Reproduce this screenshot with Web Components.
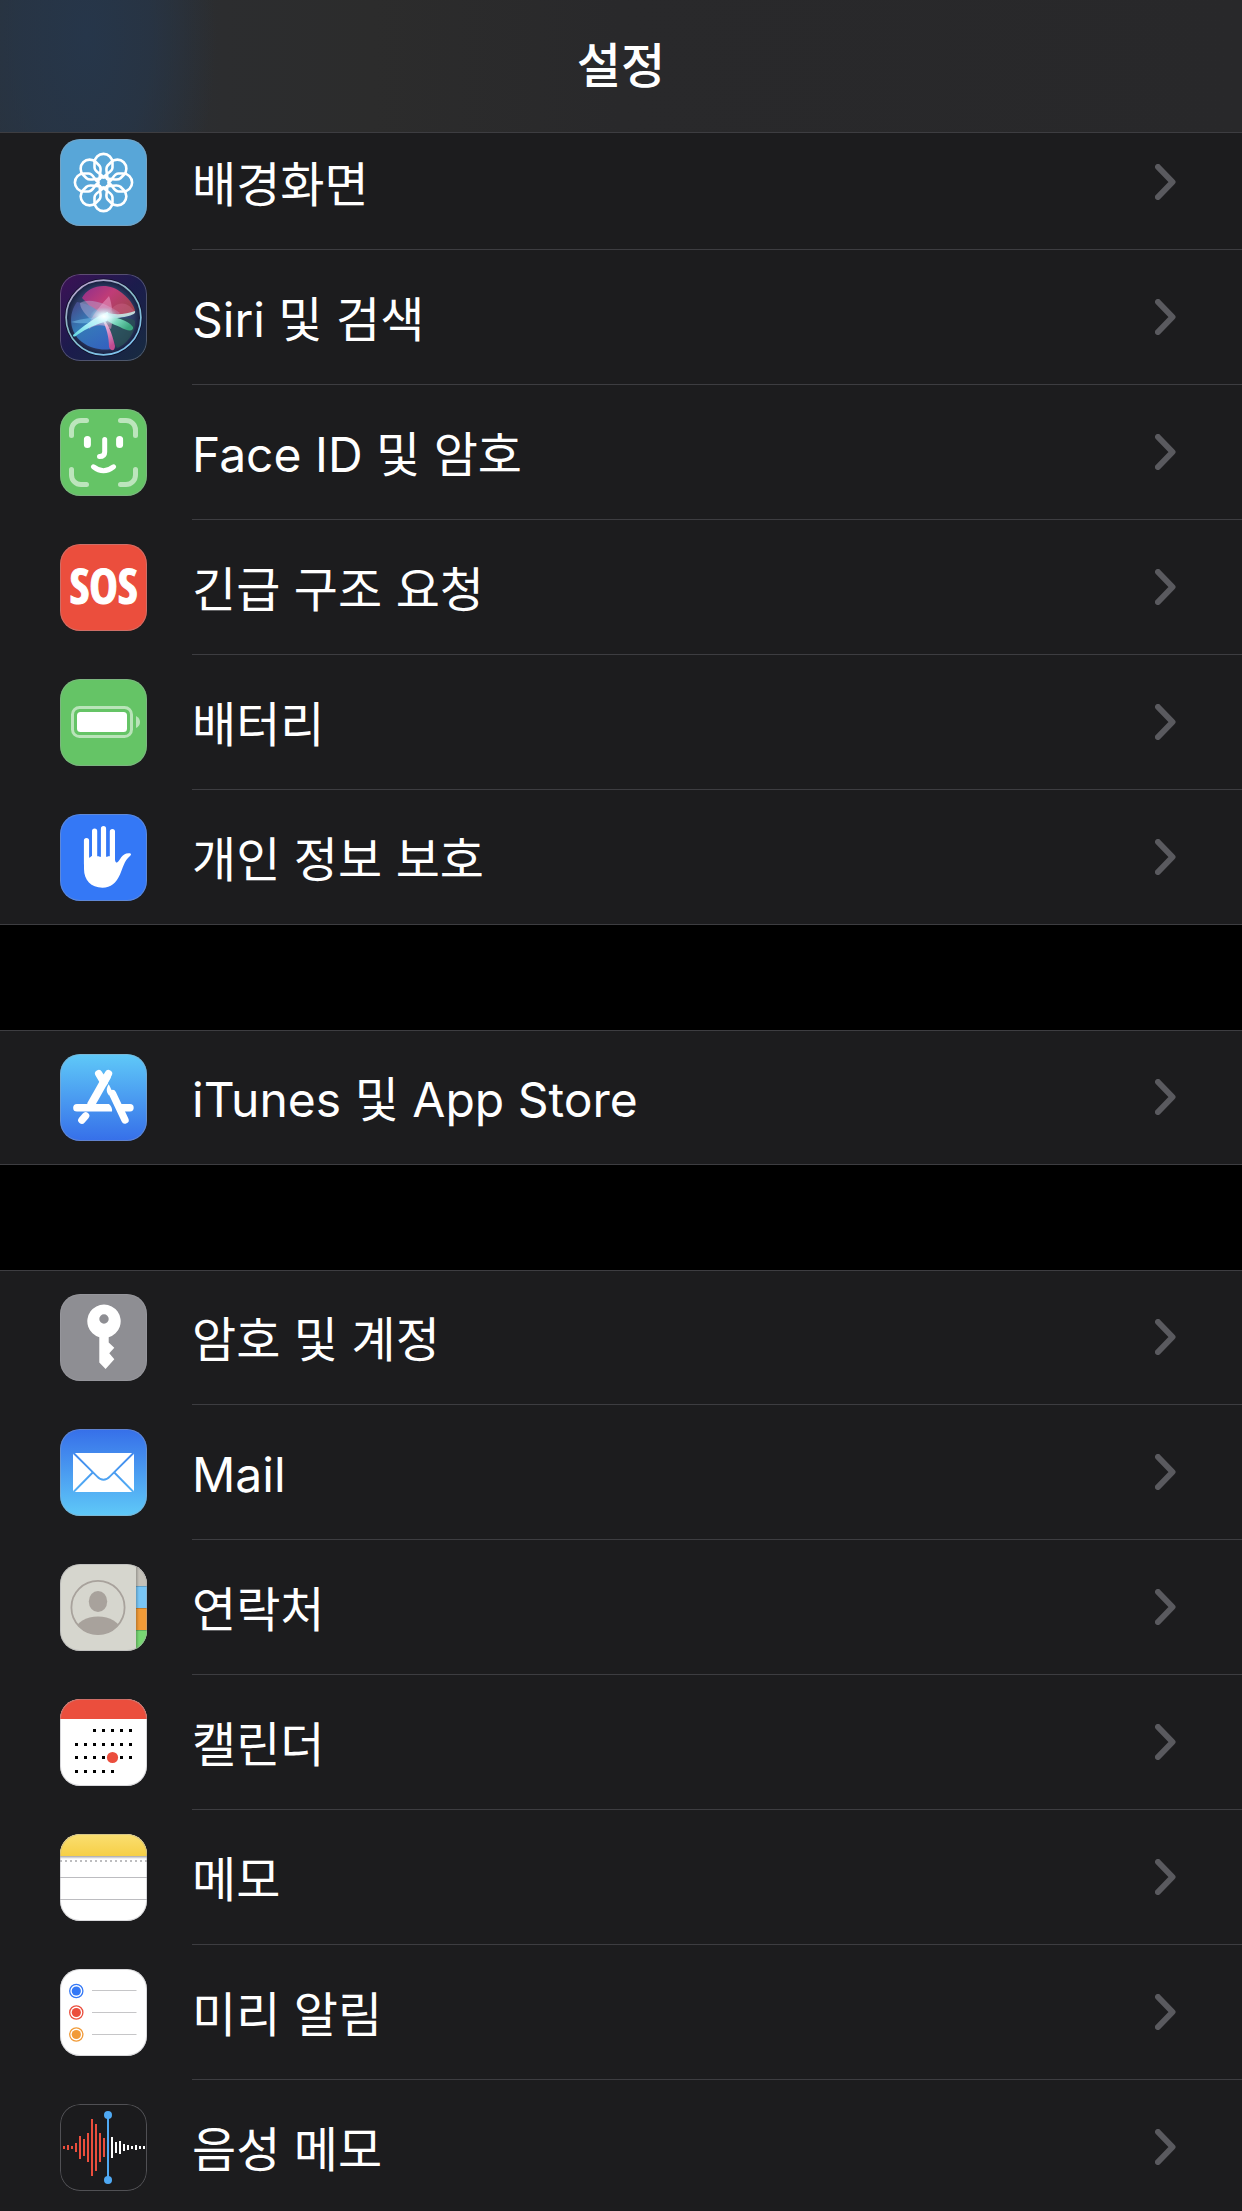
<!DOCTYPE html>
<html lang="ko">
<head>
<meta charset="utf-8">
<meta name="viewport" content="width=device-width, initial-scale=1">
<title>설정</title>
<style>
  html, body { margin: 0; height: 100%; background: #000; }
  body {
    color: #fff;
    font-family: Inter, "Noto Sans CJK KR", sans-serif;
    font-size: 48px;
    line-height: 64px;
    overflow: hidden;
  }
</style>
</head>
<body>

<settings-screen>
  <settings-header slot="header">설정</settings-header>

  <settings-group>
    <settings-row icon="wallpaper">배경화면</settings-row>
    <settings-row icon="siri">Siri 및 검색</settings-row>
    <settings-row icon="faceid">Face ID 및 암호</settings-row>
    <settings-row icon="sos">긴급 구조 요청</settings-row>
    <settings-row icon="battery">배터리</settings-row>
    <settings-row icon="privacy">개인 정보 보호</settings-row>
  </settings-group>

  <settings-group>
    <settings-row icon="appstore">iTunes 및 App Store</settings-row>
  </settings-group>

  <settings-group>
    <settings-row icon="passwords">암호 및 계정</settings-row>
    <settings-row icon="mail">Mail</settings-row>
    <settings-row icon="contacts">연락처</settings-row>
    <settings-row icon="calendar">캘린더</settings-row>
    <settings-row icon="notes">메모</settings-row>
    <settings-row icon="reminders">미리 알림</settings-row>
    <settings-row icon="voice">음성 메모</settings-row>
  </settings-group>
</settings-screen>

<script>
  const range = n => Array.from({ length: n }, (_, i) => i);

  // One calendar row of day dots, from column a to column b.
  const dots = (y, a, b) => range(b - a + 1)
    .map(i => `<rect x="${15 + 9 * (a + i)}" y="${y}" width="3" height="3"/>`).join('');

  // Waveform bars centred on the middle of the icon, 4 units apart.
  const bars = (x, heights) => heights
    .map((h, i) => `<rect x="${x + 4 * i - 1}" y="${43.5 - h / 2}" width="2" height="${h}"/>`).join('');

  const ICONS = {
    wallpaper: `
      <rect width="87" height="87" fill="#58a6d8"/>
      <g transform="translate(43.5 43.5)" fill="none" stroke="#fff" stroke-width="2.6" stroke-linejoin="round">
        ${range(8).map(i => `<path transform="rotate(${45 * i})" d="M0-5C-2-9-9-10-9-15V-19.6A9 9 0 0 1 9-19.6V-15C9-10 2-9 0-5Z"/>`).join('')}
        <circle r="5.4"/>
      </g>`,

    siri: `
      <defs>
        <linearGradient id="bg" x1="0" y1="0" x2="1" y2="1">
          <stop offset="0" stop-color="#3d1156"/><stop offset=".5" stop-color="#1b1c4c"/><stop offset="1" stop-color="#172c40"/>
        </linearGradient>
        <linearGradient id="ring" x1="0" y1="0" x2=".6" y2="1">
          <stop offset="0" stop-color="#c79bd2"/><stop offset=".5" stop-color="#86b9c4"/><stop offset="1" stop-color="#7dc1ea"/>
        </linearGradient>
        <radialGradient id="orb"><stop offset="0" stop-color="#4d6fb0"/><stop offset=".8" stop-color="#2c3a63"/><stop offset="1" stop-color="#141a38"/></radialGradient>
        <radialGradient id="glow"><stop offset="0" stop-color="#fff"/><stop offset=".35" stop-color="#e2fbff" stop-opacity=".85"/><stop offset="1" stop-color="#9fe6ee" stop-opacity="0"/></radialGradient>
        <linearGradient id="red" x1="0" y1="0" x2="1" y2=".6"><stop offset="0" stop-color="#8d2f8c"/><stop offset=".5" stop-color="#c03c77"/><stop offset="1" stop-color="#a04350"/></linearGradient>
        <linearGradient id="blue" x1="0" y1="0" x2=".7" y2="1"><stop offset="0" stop-color="#4a4488"/><stop offset=".45" stop-color="#3580bd"/><stop offset="1" stop-color="#3468c8"/></linearGradient>
        <linearGradient id="cyan" x1="1" y1="0" x2="0" y2="1"><stop offset="0" stop-color="#fff"/><stop offset=".6" stop-color="#9cecf4"/><stop offset="1" stop-color="#62d6df"/></linearGradient>
        <linearGradient id="green" x1="0" y1="0" x2="1" y2=".5"><stop offset="0" stop-color="#fff"/><stop offset=".5" stop-color="#7fe0c2"/><stop offset="1" stop-color="#3cab80"/></linearGradient>
        <linearGradient id="pink" x1="0" y1="0" x2=".3" y2="1"><stop offset="0" stop-color="#fff"/><stop offset=".5" stop-color="#e79acb"/><stop offset="1" stop-color="#c84b8f"/></linearGradient>
      </defs>
      <rect width="87" height="87" fill="url(#bg)"/>
      <circle cx="43.5" cy="43.5" r="38" fill="url(#orb)" stroke="#0d0c25" stroke-width="2"/>
      <path d="M22 24C29 10 50 8 62 19 71 26 76 35 75 39 66 44 53 42 43 43 34 40 29 30 22 24Z" fill="url(#red)"/>
      <path d="M17 28C8 40 9 58 22 68 32 76 47 77 54 74 54 62 46 52 43 43 37 33 27 30 17 28Z" fill="url(#blue)" opacity=".9"/>
      <path d="M43 43C56 45 72 43 75 47 76 57 68 70 57 74 53 64 46 52 43 43Z" fill="#2a5354" opacity=".75"/>
      <path d="M20 29C30 23 47 30 60 39 52 46 37 48 29 44 23 38 20 33 20 29Z" fill="#b9b4dc" opacity=".45"/>
      <path d="M49 22C52 29 54 44 51 55 45 51 37 49 29 55 27 47 40 32 49 22Z" fill="#f0a4d0" opacity=".5"/>
      <path d="M11 48C23 44 38 43 45 43L40 49C27 49 17 50 11 48Z" fill="#7cc6ee" opacity=".5"/>
      <path d="M52 34C62 25 71 31 75 39 69 42 60 41 48 42Z" fill="#ca6387" opacity=".45"/>
      <path d="M46 38C54 42 67 40 75 37 77 42 60 44 47 45Z" fill="#c5f2ee" opacity=".85"/>
      <path d="M44 42C56 43 68 46 73 53 74 58 67 57 60 53 52 50 46 47 44 42Z" fill="url(#green)" opacity=".95"/>
      <path d="M41 43C48 48 52 59 55 72 55 77 51 78 49 73 49 64 47 54 41 43Z" fill="url(#pink)" opacity=".95"/>
      <path d="M48 38C35 43 22 53 13 61 13 63 15 63 17 61 27 54 37 50 47 47Z" fill="url(#cyan)"/>
      <ellipse cx="44" cy="42.5" rx="14" ry="9.5" fill="url(#glow)"/>
      <circle cx="43.5" cy="43.5" r="37.4" fill="none" stroke="url(#ring)" stroke-width="1.7"/>`,

    faceid: `
      <rect width="87" height="87" fill="#65c466"/>
      <g fill="none" stroke="#fff" stroke-linecap="round">
        <g stroke-width="5" stroke="#bce5bc">
          <path d="M26.5 11.6H21A9.5 9.5 0 0 0 11.5 21V26.5"/>
          <path d="M60.5 11.6H66A9.5 9.5 0 0 1 75.5 21V26.5"/>
          <path d="M26.5 75.5H21A9.5 9.5 0 0 1 11.5 66V60.5"/>
          <path d="M60.5 75.5H66A9.5 9.5 0 0 0 75.5 66V60.5"/>
        </g>
        <path stroke-width="7" d="M27.4 30.5V35.5M59.6 30.5V35.5"/>
        <path stroke-width="5" d="M44.7 30.5V43Q44.7 47.6 39.5 47.6"/>
        <path stroke-width="5" d="M33.4 57.8Q43.5 65.8 53.6 57.8"/>
      </g>`,

    sos: `
      <rect width="87" height="87" fill="#eb4e3d"/>
      <text x="43.5" y="60" text-anchor="middle" fill="#fff" stroke="#fff" stroke-width="1" font-family="'Liberation Sans Narrow', 'Open Sans Condensed', 'Roboto Condensed', sans-serif" font-weight="700" font-size="48">SOS</text>`,

    battery: `
      <rect width="87" height="87" fill="#65c466"/>
      <rect x="12.5" y="28.5" width="59" height="29" rx="7" fill="none" stroke="#b9e4b9" stroke-width="3"/>
      <rect x="17" y="33" width="50" height="20" rx="3.5" fill="#fff"/>
      <path d="M76 37Q80 39 80 43T76 49Z" fill="#b9e4b9"/>`,

    privacy: `
      <rect width="87" height="87" fill="#3478f6"/>
      <g stroke="#fff" stroke-width="5.2" stroke-linecap="round">
        <path d="M26.5 26.5V50M34.6 17V50M43.5 14.7V50M52.4 17.6V50"/>
      </g>
      <path d="M24 42C25 44.5 30 44.5 31.5 42 33.5 43.5 36 43.5 38 42 39.5 43.5 47 43.5 49 42 51 43.5 55 42 55 42 54.6 46 55.5 49 57 48.5 60 47 61.5 39 69 39.2 71.5 39.4 71.5 40.5 70 42 64 47 63 54 60 60.5 56 69 51 73.7 42.5 73.7 31 73.7 24 66 24 55Z" fill="#fff"/>`,

    appstore: `
      <defs>
        <linearGradient id="sky" x1="0" y1="0" x2="0" y2="1"><stop offset="0" stop-color="#5fc9f8"/><stop offset="1" stop-color="#366fe9"/></linearGradient>
      </defs>
      <rect width="87" height="87" fill="url(#sky)"/>
      <g fill="none" stroke="#fff" stroke-width="7.4" stroke-linecap="round">
        <path d="M48.5 19.6L44 27.5"/>
        <path d="M38.7 19.6L44 28.5"/>
        <path d="M47.5 21.5L30.5 51.5" stroke-width="8" stroke-linecap="butt"/>
        <path d="M61 53.8H70"/>
        <path d="M52.5 39.5L65 66"/>
        <path d="M25.6 61.9L21.9 66.2"/>
      </g>
      <path d="M48.8 30.2C46 34.5 46 37.5 49 41.5L52.5 38Z" fill="#fff"/>
      <path d="M17 49.9H49C51.5 52 52.5 55 52 57.6H17A3.85 3.85 0 0 1 17 49.9Z" fill="#fff"/>`,

    passwords: `
      <rect width="87" height="87" fill="#8e8e93"/>
      <path fill="#fff" fill-rule="evenodd" d="M39.3 43.3A16.7 16.7 0 1 1 48.7 43.3V48.5L54.3 53.8 49.3 59.2 54.3 65.3 45.6 75 39.3 68.6ZM44 20.3A4.7 4.7 0 1 0 44 29.7 4.7 4.7 0 1 0 44 20.3Z"/>`,

    mail: `
      <defs>
        <linearGradient id="sea" x1="0" y1="0" x2="0" y2="87" gradientUnits="userSpaceOnUse"><stop offset="0" stop-color="#366fe9"/><stop offset="1" stop-color="#5fc9f8"/></linearGradient>
      </defs>
      <rect width="87" height="87" fill="url(#sea)"/>
      <rect x="13" y="24" width="61" height="39" rx="1.5" fill="#fff"/>
      <g fill="none" stroke="url(#sea)" stroke-width="1.9">
        <path d="M13.5 24L37 47.3Q43.5 54.2 50 47.3L73.5 24"/>
        <path d="M13.5 63L32.7 43.5M73.5 63L54.3 43.5"/>
      </g>`,

    contacts: `
      <defs>
        <clipPath id="disc"><circle cx="38" cy="43.5" r="27"/></clipPath>
        <linearGradient id="shade"><stop offset="0" stop-opacity=".22"/><stop offset="1" stop-opacity="0"/></linearGradient>
      </defs>
      <rect width="87" height="87" fill="#d6d6ce"/>
      <rect x="76" width="11" height="22" fill="#c4c1b9"/>
      <rect x="76" y="22" width="11" height="22" fill="#78c5f5"/>
      <rect x="76" y="44" width="11" height="22" fill="#f09a37"/>
      <rect x="76" y="66" width="11" height="21" fill="#77d672"/>
      <path d="M76 22.5H87M76 44.5H87M76 66.5H87" stroke="#000" stroke-opacity=".18"/>
      <rect x="76" width="3" height="87" fill="url(#shade)"/>
      <circle cx="38" cy="43.5" r="26.6" fill="none" stroke="#a8a29c" stroke-width="1.8"/>
      <ellipse cx="38" cy="37.5" rx="9.2" ry="10.5" fill="#a8a29c"/>
      <ellipse cx="38" cy="66" rx="22" ry="13.4" fill="#a8a29c" clip-path="url(#disc)"/>`,

    calendar: `
      <rect width="87" height="87" fill="#fff"/>
      <rect width="87" height="20" fill="#eb4e3d"/>
      <g fill="#000">${dots(30, 2, 6)}${dots(44, 0, 6)}${dots(57, 0, 6)}${dots(71, 0, 4)}</g>
      <circle cx="52.5" cy="58.5" r="5.6" fill="#eb4e3d"/>`,

    notes: `
      <defs>
        <linearGradient id="sun" x1="0" y1="0" x2="0" y2="1"><stop offset="0" stop-color="#fadf72"/><stop offset="1" stop-color="#f6cf46"/></linearGradient>
        <linearGradient id="edge" x1="0" y1="0" x2="0" y2="1"><stop offset="0" stop-color="#a5a5a8"/><stop offset="1" stop-color="#fff"/></linearGradient>
      </defs>
      <rect width="87" height="87" fill="#fff"/>
      <rect width="87" height="22" fill="url(#sun)"/>
      <rect y="22" width="87" height="3" fill="url(#edge)"/>
      <path d="M0 27H87" stroke="#bdbdbf" stroke-width="2" stroke-dasharray="2 3"/>
      <path d="M0 43.5H87M0 65.5H87" stroke="#bcbcc0"/>`,

    reminders: `
      <rect width="87" height="87" fill="#fff"/>
      ${[['#3478f6', 22], ['#eb4e3d', 43.5], ['#f19a37', 65.5]].map(([c, y]) => `
        <circle cx="16.3" cy="${y}" r="6.6" fill="none" stroke="${c}" stroke-width="1.3"/>
        <circle cx="16.3" cy="${y}" r="4.6" fill="${c}"/>`).join('')}
      <path d="M32 21.5H76.5M32 43.5H76.5M32 65.5H76.5" stroke="#c6c6c8"/>`,

    voice: `
      <rect width="87" height="87" fill="#1b1b1d"/>
      <g fill="#eb4e3d">${bars(4, [3, 5, 3, 9, 23, 17, 29, 57, 47, 29, 19])}</g>
      <g fill="#fff">${bars(52, [21, 11, 13, 7, 5, 3, 5, 3, 3])}</g>
      <path d="M48 11V76" stroke="#4fa9f4" stroke-width="2"/>
      <circle cx="48" cy="11" r="4" fill="#4fa9f4"/>
      <circle cx="48" cy="76" r="4" fill="#4fa9f4"/>`
  };

  // Registers an element whose shadow markup is a string, or a function of the element.
  const define = (name, markup) => customElements.define(name, class extends HTMLElement {
    connectedCallback() {
      if (this.shadowRoot) return;
      this.attachShadow({ mode: 'open' }).innerHTML =
        typeof markup === 'function' ? markup(this) : markup;
    }
  });

  // Whole screen: a fixed bar above a list that scrolls beneath it.
  define('settings-screen', `
    <style>
      :host { display: flex; flex-direction: column; height: 100vh; overflow: hidden; }
      main {
        flex: 1; min-height: 0; overflow-y: auto; scrollbar-width: none;
        display: flex; flex-direction: column; gap: 105px;
        margin-top: -18px;
      }
      ::slotted(settings-group) { flex: none; }
    </style>
    <slot name="header"></slot>
    <main><slot></slot></main>`);

  define('settings-header', `
    <style>
      :host {
        display: flex; align-items: center; justify-content: center;
        box-sizing: border-box; height: 133px; flex: none;
        position: relative; z-index: 1;
        border-bottom: 1px solid #3d3d41;
        background:
          radial-gradient(ellipse 130px 260px at 86px 36px, #26364a 0, #26364ab0 50%, #26364a00 100%),
          linear-gradient(90deg, #2a323b 0, #2c2d2f 18%, #2c2c2c 30%, #29292b 50%, #28282a 100%);
      }
      h1 { margin: 0; font-size: 48px; line-height: 64px; font-weight: 500; }
    </style>
    <h1><slot></slot></h1>`);

  define('settings-group', `
    <style>
      :host {
        display: block; background: #1c1c1e;
        box-shadow: inset 0 1px #3d3d41, inset 0 -1px #3d3d41;
      }
    </style>
    <slot></slot>`);

  define('app-icon', el => `
    <style>
      :host { display: block; width: 87px; height: 87px; border-radius: 20px; overflow: hidden; position: relative; }
      :host::after {
        content: ""; position: absolute; inset: 0; border-radius: inherit;
        box-shadow: inset 0 0 0 1px rgba(160, 160, 168, .4);
      }
      svg { display: block; width: 100%; height: 100%; }
    </style>
    <svg viewBox="0 0 87 87" aria-hidden="true">${ICONS[el.getAttribute('name')]}</svg>`);

  define('settings-row', el => `
    <style>
      :host { display: block; }
      a { display: flex; align-items: center; gap: 45px; height: 135px; padding-left: 60px; color: inherit; text-decoration: none; }
      .body {
        flex: 1; align-self: stretch; box-sizing: border-box;
        display: flex; align-items: center; justify-content: space-between;
        padding-right: 66px; border-bottom: 1px solid #3d3d41;
      }
      .label { padding-top: 5px; }
      svg { display: block; width: 21px; height: 36px; }
    </style>
    <a href="#${el.getAttribute('icon')}">
      <app-icon name="${el.getAttribute('icon')}"></app-icon>
      <span class="body">
        <span class="label"><slot></slot></span>
        <svg viewBox="0 0 21 36" aria-hidden="true"><path d="M3 3L17.5 18 3 33" fill="none" stroke="#5a5a5f" stroke-width="6" stroke-linecap="round" stroke-linejoin="round"/></svg>
      </span>
    </a>`);
</script>
</body>
</html>
